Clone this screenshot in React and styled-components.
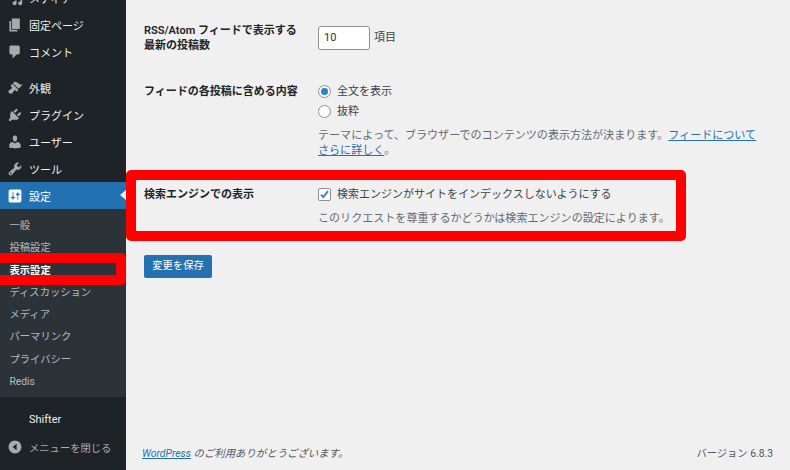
import React from "react";
import styled, { createGlobalStyle } from "styled-components";

const Global = createGlobalStyle`
  html, body { margin: 0; padding: 0; width: 790px; height: 470px; overflow: hidden; background: #f0f0f1; }
  * { box-sizing: border-box; }
  body { font-family: Roboto, "Noto Sans CJK JP", sans-serif; font-size: 10.3px; color: #3c434a; }
`;

const Page = styled.div`
  position: relative;
  display: flex;
  width: 790px;
  height: 470px;
  overflow: hidden;
`;
const Sidebar = styled.nav`
  flex: 0 0 126px;
  height: 470px;
  background: #1d2327;
  overflow: hidden;
  display: flex;
  flex-direction: column;
`;
const MenuItems = styled.div`
  display: flex;
  flex-direction: column;
  margin-top: -16px;
`;
const MenuItem = styled.div`
  position: relative;
  display: flex;
  align-items: center;
  flex: 0 0 27px;
  height: 27px;
  padding-left: 7px;
  gap: 6px;
  color: ${p => (p.$active ? "#fff" : "#f0f0f1")};
  background: ${p => (p.$active ? "#2271b1" : "transparent")};
  margin-bottom: ${p => (p.$gap ? "9px" : "0")};
  font-size: 11px;
  svg { fill: ${p => (p.$active ? "#fff" : "#a7aaad")}; flex: 0 0 16px; }
`;
const ActiveArrow = styled.span`
  position: absolute;
  right: 0;
  top: 8px;
  border: 5.5px solid transparent;
  border-right: 6px solid #f0f0f1;
  border-left: 0;
`;
const Submenu = styled.div`
  display: flex;
  flex-direction: column;
  background: #2c3338;
  padding: 6px 0 4px;
`;
const SubItem = styled.div`
  height: 22.3px;
  line-height: 22.3px;
  padding-left: 9.5px;
  font-size: 10.3px;
  font-weight: ${p => (p.$current ? 600 : 400)};
  color: ${p => (p.$current ? "#fff" : "rgba(240,246,252,.7)")};
`;
const Shifter = styled.div`
  margin-top: 11px;
  height: 24px;
  line-height: 24px;
  padding-left: 29px;
  color: #f0f0f1;
  font-size: 11px;
`;
const Collapse = styled.div`
  display: flex;
  align-items: center;
  gap: 6px;
  margin-top: 3px;
  padding-left: 7px;
  height: 24px;
  font-size: 10.3px;
  color: #a7aaad;
  svg { fill: #a7aaad; flex: 0 0 16px; }
`;
const Main = styled.main`
  flex: 1;
  height: 470px;
  display: flex;
  flex-direction: column;
  padding: 23px 17px 0 18px;
`;
const Row = styled.div`
  display: grid;
  grid-template-columns: 174px 1fr;
  margin-bottom: ${p => p.$mb}px;
`;
const Label = styled.div`
  font-size: 11px;
  line-height: 15px;
  font-weight: 600;
  color: #1d2327;
`;
const Field = styled.div`
  display: flex;
  flex-direction: column;
  font-size: 11px;
  line-height: 15px;
  padding-top: ${p => p.$pt || 0}px;
`;
const Inline = styled.div`
  display: flex;
  align-items: center;
  gap: 4px;
`;
const NumberInput = styled.div`
  width: 52px;
  height: 24px;
  border: 1px solid #8c8f94;
  border-radius: 3px;
  background: #fff;
  color: #2c3338;
  font-size: 11px;
  line-height: 22px;
  padding-left: 5px;
`;
const Unit = styled.span`
  position: relative;
  top: -1px;
`;
const Radio = styled.span`
  width: 13px;
  height: 13px;
  border: 1px solid #8c8f94;
  border-radius: 50%;
  background: #fff;
  display: flex;
  align-items: center;
  justify-content: center;
  margin-right: 2px;
  &::after {
    content: "";
    display: ${p => (p.$on ? "block" : "none")};
    width: 6.5px;
    height: 6.5px;
    border-radius: 50%;
    background: #3582c4;
  }
`;
const RadioLine = styled(Inline)`
  height: 15px;
  margin-bottom: ${p => p.$mb || 0}px;
`;
const Desc = styled.div`
  font-size: 11.05px;
  line-height: 15px;
  color: #646970;
  margin-top: ${p => p.$mt}px;
  width: 445px;
`;
const A = styled.a`
  color: #2271b1;
  text-decoration: underline;
`;
const Checkbox = styled.span`
  width: 13px;
  height: 13px;
  border: 1px solid #8c8f94;
  border-radius: 2px;
  background: #fff;
  margin-right: 2px;
  display: flex;
  svg { display: block; }
`;
const SaveButton = styled.div`
  align-self: flex-start;
  width: 68px;
  height: 23px;
  line-height: 22px;
  text-align: center;
  background: #2271b1;
  border-radius: 2px;
  color: #fff;
  font-size: 10.3px;
`;
const Footer = styled.footer`
  margin-top: auto;
  margin-left: -2px;
  height: 24px;
  display: flex;
  justify-content: space-between;
  font-size: 10.4px;
  line-height: 15px;
  color: #50575e;
`;
const Thanks = styled.i``;
const Version = styled.span`
  font-size: 10.3px;
`;
const RedBox = styled.div`
  position: absolute;
  left: 126px;
  top: 170px;
  width: 560px;
  height: 71px;
  border: 10px solid #f00;
  border-radius: 5px;
`;
const RedSide = styled.div`
  position: absolute;
  left: -10px;
  top: 253px;
  width: 136px;
  height: 32px;
  border: 10px solid #f00;
  border-left: 0;
  border-radius: 5px;
`;

const Icon = ({ d }) => (
  <svg width="16" height="16" viewBox="0 0 20 20"><path d={d} /></svg>
);
const icons = {
  media: "M13 11V4c0-.55-.45-1-1-1h-1.67L9 1H5L3.67 3H2c-.55 0-1 .45-1 1v7c0 .55.45 1 1 1h10c.55 0 1-.45 1-1zM7 4.500c1.380 0 2.500 1.120 2.500 2.500S8.380 9.500 7 9.500 4.500 8.380 4.500 7 5.620 4.500 7 4.500zM14 6h5v10.500c0 1.380-1.120 2.500-2.500 2.500S14 17.880 14 16.500s1.120-2.500 2.500-2.500c.17 0 .34.020.5.050V9h-3V6zm-4 8.050V13h2v3.500c0 1.380-1.120 2.500-2.500 2.500S7 17.880 7 16.500 8.120 14 9.500 14c.17 0 .34.020.5.050z",
  page: "M6 15V2h10v13H6zm-1 1h8v2H3V5h2v11z",
  comment: "M5 2h9c1.100 0 2 .9 2 2v7c0 1.100-.9 2-2 2h-2l-5 5v-5H5c-1.100 0-2-.9-2-2V4c0-1.100.9-2 2-2z",
  brush: "M14.480 11.060L7.410 3.990l1.500-1.500c.5-.56 2.300-.47 3.510.32 1.210.8 1.430 1.280 2.910 2.100 1.180.64 2.450 1.260 4.450.85zm-.71.71L6.700 4.700 4.930 6.470c-.39.39-.39 1.020 0 1.410l1.060 1.060c.39.39.39 1.030 0 1.420-.6.6-1.430 1.110-2.210 1.690-.35.26-.7.53-1.010.84C1.430 13.230 1.430 15.100 2.580 16.260s3.030 1.150 4.180-.01c.31-.31.58-.66.84-1.010.58-.78 1.090-1.610 1.690-2.210.39-.39 1.020-.39 1.410 0l1.060 1.060c.39.39 1.020.39 1.410 0z",
  plugin: "M13.110 4.360L9.870 7.600 8 5.730l3.240-3.240c.35-.34 1.050-.2 1.560.32.52.51.66 1.210.31 1.550zm-8 1.770l.91-1.120 9.010 9.010-1.190.84c-.71.71-2.630 1.160-3.820 1.160H6.140L4.900 17.260c-.59.59-1.540.59-2.120 0-.59-.58-.59-1.530 0-2.120l1.240-1.240v-3.880c0-1.130.4-3.190 1.090-3.890zm7.260 3.970l3.240-3.240c.34-.35 1.040-.21 1.550.31.52.51.66 1.210.31 1.550l-3.240 3.250z",
  user: "M10 9.250c-2.270 0-2.730-3.440-2.730-3.440C7 4.020 7.820 2 9.970 2c2.160 0 2.980 2.020 2.710 3.810 0 0-.41 3.440-2.680 3.440zm0 2.570L12.720 10c2.390 0 4.520 2.330 4.520 4.530v2.490s-3.650 1.130-7.240 1.130c-3.650 0-7.240-1.130-7.240-1.130v-2.490c0-2.250 1.940-4.480 4.470-4.480z",
  tool: "M16.680 9.770c-1.340 1.340-3.300 1.670-4.950.99l-5.410 6.520c-.99.99-2.590.99-3.580 0s-.99-2.590 0-3.570l6.520-5.420c-.68-1.650-.35-3.610.99-4.950 1.280-1.280 3.120-1.620 4.720-1.060l-2.890 2.890 2.820 2.820 2.860-2.870c.53 1.580.18 3.390-1.080 4.650zM3.810 16.210c.4.39 1.040.39 1.430 0 .4-.4.4-1.040 0-1.430-.39-.4-1.030-.4-1.430 0-.39.39-.39 1.030 0 1.430z",
  settings: "M18 16V4c0-1.100-.9-2-2-2H4c-1.100 0-2 .9-2 2v12c0 1.100.9 2 2 2h12c1.100 0 2-.9 2-2zM8 11h1c.55 0 1 .45 1 1s-.45 1-1 1H8v1.500c0 .28-.22.5-.5.5s-.5-.22-.5-.5V13H6c-.55 0-1-.45-1-1s.45-1 1-1h1V5.500c0-.28.22-.5.5-.5s.5.22.5.5V11zm5-2h-1c-.55 0-1-.45-1-1s.45-1 1-1h1V5.500c0-.28.22-.5.5-.5s.5.22.5.5V7h1c.55 0 1 .45 1 1s-.45 1-1 1h-1v5.500c0 .28-.22.5-.5.5s-.5-.22-.5-.5V9z",
  collapse: "M18 10c0-4.420-3.590-8-8-8s-8 3.580-8 8 3.590 8 8 8 8-3.580 8-8zM12 14l-5-4 5-4v8z",
};

export default function App() {
  return (
    <Page>
      <Global />
      <Sidebar>
        <MenuItems>
          <MenuItem><Icon d={icons.media} />メディア</MenuItem>
          <MenuItem><Icon d={icons.page} />固定ページ</MenuItem>
          <MenuItem $gap><Icon d={icons.comment} />コメント</MenuItem>
          <MenuItem><Icon d={icons.brush} />外観</MenuItem>
          <MenuItem><Icon d={icons.plugin} />プラグイン</MenuItem>
          <MenuItem><Icon d={icons.user} />ユーザー</MenuItem>
          <MenuItem><Icon d={icons.tool} />ツール</MenuItem>
          <MenuItem $active><Icon d={icons.settings} />設定<ActiveArrow /></MenuItem>
        </MenuItems>
        <Submenu>
          <SubItem>一般</SubItem>
          <SubItem>投稿設定</SubItem>
          <SubItem $current>表示設定</SubItem>
          <SubItem>ディスカッション</SubItem>
          <SubItem>メディア</SubItem>
          <SubItem>パーマリンク</SubItem>
          <SubItem>プライバシー</SubItem>
          <SubItem>Redis</SubItem>
        </Submenu>
        <Shifter>Shifter</Shifter>
        <Collapse><Icon d={icons.collapse} />メニューを閉じる</Collapse>
      </Sidebar>
      <Main>
        <Row $mb={31}>
          <Label>RSS/Atom フィードで表示する<br />最新の投稿数</Label>
          <Field $pt={3}>
            <Inline>
              <NumberInput>10</NumberInput>
              <Unit>項目</Unit>
            </Inline>
          </Field>
        </Row>
        <Row $mb={29}>
          <Label>フィードの各投稿に含める内容</Label>
          <Field>
            <RadioLine $mb={5}><Radio $on />全文を表示</RadioLine>
            <RadioLine><Radio />抜粋</RadioLine>
            <Desc $mt={9}>
              テーマによって、ブラウザーでのコンテンツの表示方法が決まります。<A>フィードについて<br />さらに詳しく</A>。
            </Desc>
          </Field>
        </Row>
        <Row $mb={29}>
          <Label>検索エンジンでの表示</Label>
          <Field>
            <RadioLine>
              <Checkbox>
                <svg width="11" height="11" viewBox="0 0 11 11"><path d="M2 5.600l2.300 2.500L9 2.200" fill="none" stroke="#3582c4" strokeWidth="1.900" /></svg>
              </Checkbox>
              検索エンジンがサイトをインデックスしないようにする
            </RadioLine>
            <Desc $mt={9}>このリクエストを尊重するかどうかは検索エンジンの設定によります。</Desc>
          </Field>
        </Row>
        <SaveButton>変更を保存</SaveButton>
        <Footer>
          <Thanks><A>WordPress</A> のご利用ありがとうございます。</Thanks>
          <Version>バージョン 6.8.3</Version>
        </Footer>
      </Main>
      <RedBox />
      <RedSide />
    </Page>
  );
}
